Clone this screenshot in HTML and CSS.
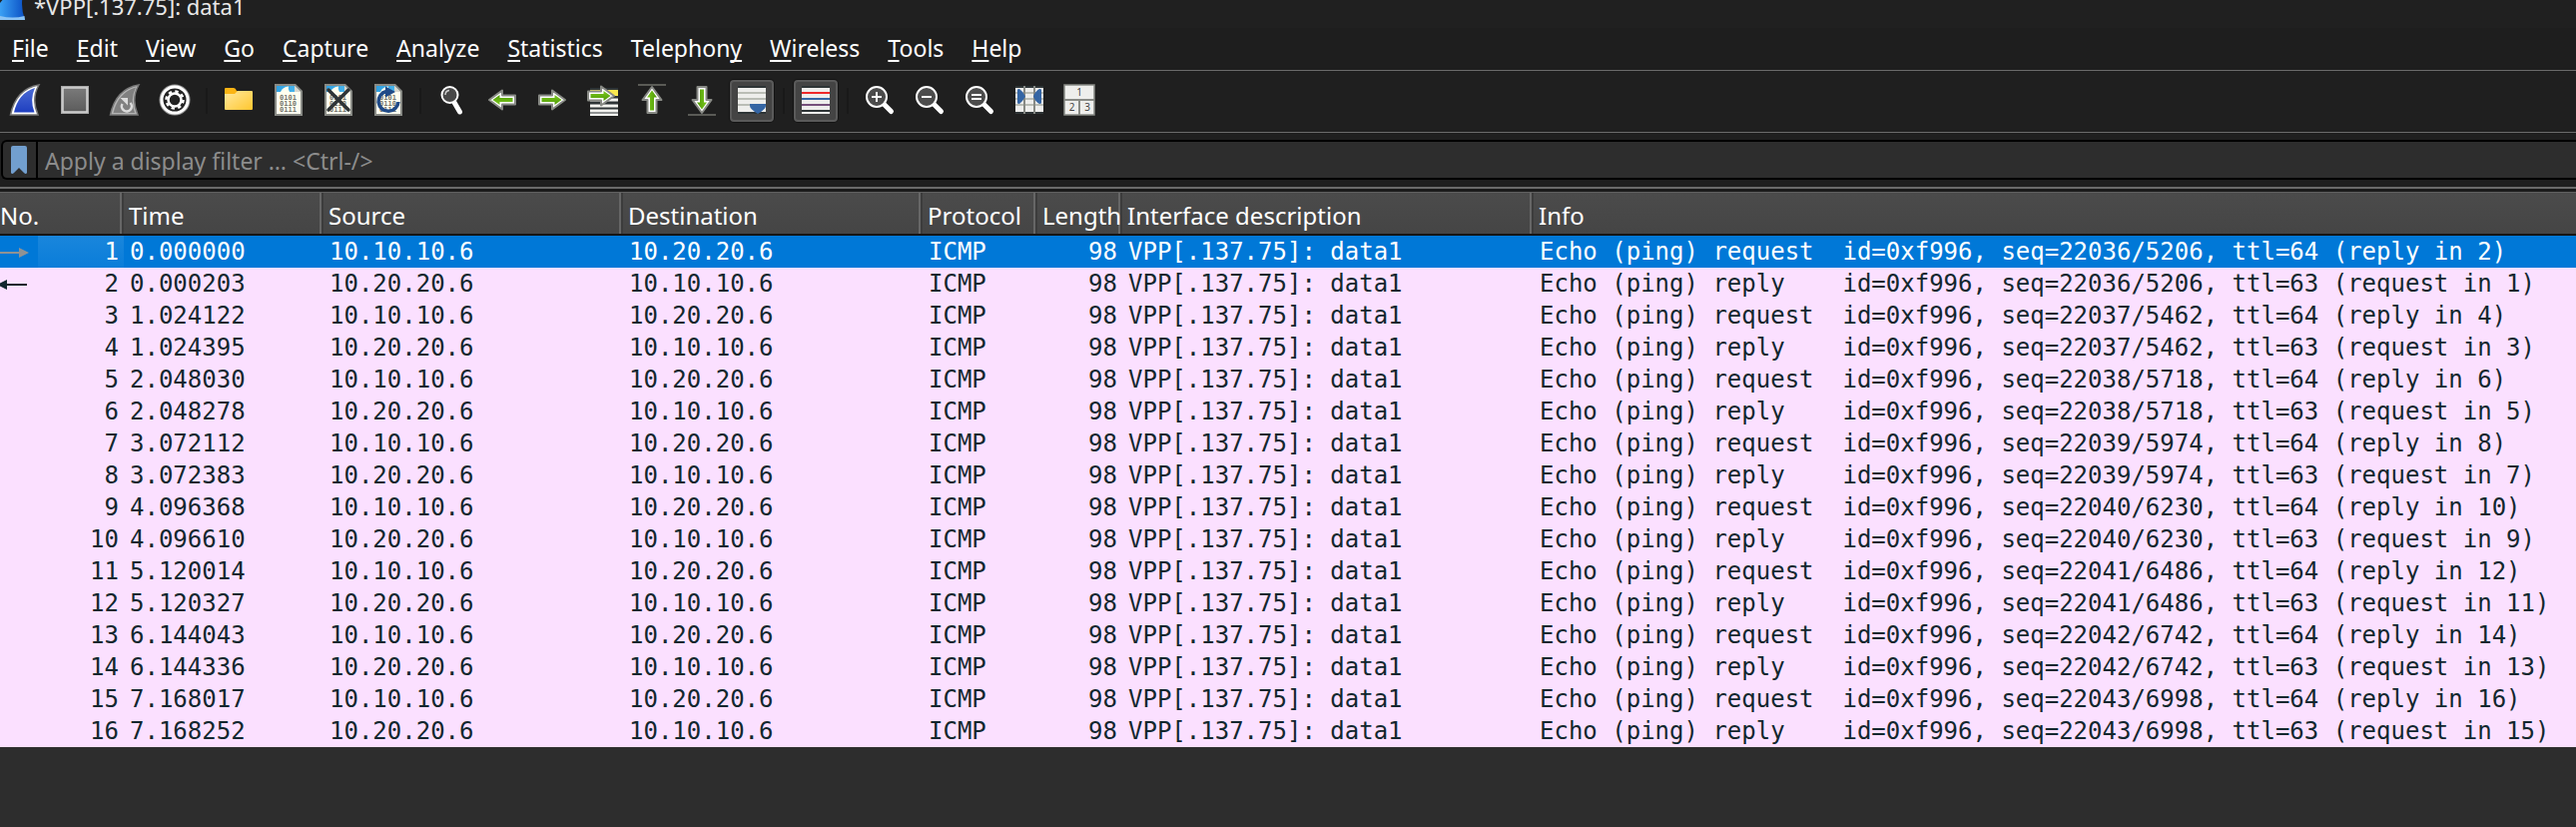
FILE: index.html
```html
<!DOCTYPE html>
<html lang="en">
<head>
<meta charset="utf-8">
<title>*VPP[.137.75]: data1</title>
<link rel="stylesheet" href="styles.css">
</head>
<body>
<svg class="defs" aria-hidden="true">
  <defs>
    <linearGradient id="blue" x1="0" y1="0" x2="0" y2="1"><stop offset="0" stop-color="#4a6ad4"/><stop offset="1" stop-color="#1f3fc0"/></linearGradient>
    <linearGradient id="app" x1="0" y1="0" x2="1" y2="0"><stop offset="0" stop-color="#3aa0f4"/><stop offset="1" stop-color="#0a4fc4"/></linearGradient>
    <linearGradient id="grey" x1="0" y1="0" x2="0" y2="1"><stop offset="0" stop-color="#7a7a7a"/><stop offset="1" stop-color="#5c5c5c"/></linearGradient>
    <linearGradient id="green" x1="0" y1="0" x2="0" y2="1"><stop offset="0" stop-color="#7cc820"/><stop offset="1" stop-color="#4e9a06"/></linearGradient>
    <linearGradient id="gold" x1="0" y1="0" x2="1" y2="1"><stop offset="0" stop-color="#ffe9a0"/><stop offset="1" stop-color="#ffc62e"/></linearGradient>
    <linearGradient id="sky" x1="0" y1="0" x2="1" y2="0"><stop offset="0" stop-color="#2f9fe0"/><stop offset="1" stop-color="#4db8ee"/></linearGradient>
    <symbol id="doc" viewBox="0 0 32 32">
      <path d="M2 0H23L30 7V32H2Z" fill="#888a85"/>
      <path d="M4 2H22L28 8V30H4Z" fill="#fffff0"/>
      <path d="M4 2H22L27 8H17Q15 5 16 2.500Q10 3 8 8H4Z" fill="url(#sky)"/>
      <path d="M22 2V8H28Z" fill="#d8d8d0"/>
      <g class="bits"><text x="7" y="16">0101</text><text x="7" y="22">0110</text><text x="7" y="28">0111</text></g>
    </symbol>
    <symbol id="arrow" viewBox="0 0 32 32">
      <path d="M3 11.500H16V6.500L29 16L16 25.500V20.500H3Z" fill="#fff" stroke="#888a85" stroke-width="2" stroke-linejoin="round"/>
      <path d="M5.500 14H18.500V11L25.500 16L18.500 21V18H5.500Z" fill="url(#green)"/>
    </symbol>
    <symbol id="lens" viewBox="0 0 32 32">
      <path d="M19 19L27.500 27.500" stroke="#fff" stroke-width="5" stroke-linecap="round"/>
      <circle cx="13" cy="13" r="10" fill="#4c4c4c" stroke="#fff" stroke-width="2"/>
    </symbol>
  </defs>
</svg>

<header class="titlebar">
  <svg class="app-icon" viewBox="0 0 26 32" aria-hidden="true"><path d="M0 32V15Q9 3 25 0Q19 16 25 32Z" fill="url(#app)"/><path d="M0 28Q13 31 24.500 28L25 32H0Z" fill="#8cc4f4"/></svg>
  <span class="title">*VPP[.137.75]: data1</span>
</header>

<nav class="menubar" aria-label="Main menu">
  <button type="button"><u>F</u>ile</button>
  <button type="button"><u>E</u>dit</button>
  <button type="button"><u>V</u>iew</button>
  <button type="button"><u>G</u>o</button>
  <button type="button"><u>C</u>apture</button>
  <button type="button"><u>A</u>nalyze</button>
  <button type="button"><u>S</u>tatistics</button>
  <button type="button">Telephon<u>y</u></button>
  <button type="button"><u>W</u>ireless</button>
  <button type="button"><u>T</u>ools</button>
  <button type="button"><u>H</u>elp</button>
</nav>

<div class="toolbar" role="toolbar" aria-label="Main toolbar">
  <button type="button" aria-label="Start capture"><svg viewBox="0 0 32 32"><path d="M1.500 31Q7 5 30 1Q22 15 29 31Z" fill="#fff" stroke="#777" stroke-width="1.500"/><path d="M5 28.500Q9.500 9 26 4Q20.500 16 25.500 28.500Z" fill="url(#blue)"/></svg></button>
  <button type="button" aria-label="Stop capture"><svg viewBox="0 0 32 32"><path d="M2 2H30V30H2Z" fill="#a8a8a8"/><path d="M4 4H28V28H4Z" fill="url(#grey)" stroke="#d4d4d4" stroke-width="1.500"/></svg></button>
  <button type="button" aria-label="Restart capture"><svg viewBox="0 0 32 32"><path d="M1.500 31Q7 5 30 1Q22 15 29 31Z" fill="#b4b4b4" stroke="#777" stroke-width="1.500"/><path d="M4.500 29Q9.500 8.500 27 3.500Q21 16 26 29Z" fill="#808080"/><path d="M13.500 20A5 5 0 1 0 21.500 19" fill="none" stroke="#dcdcdc" stroke-width="2.500"/><path d="M11.500 14H19V21.500Z" fill="#dcdcdc"/></svg></button>
  <button type="button" aria-label="Capture options"><svg viewBox="0 0 32 32"><circle cx="16" cy="16" r="15.500" fill="#999"/><circle cx="16" cy="16" r="13" fill="#222" stroke="#fff" stroke-width="3"/><circle cx="16" cy="16" r="6.500" fill="none" stroke="#fff" stroke-width="2.500"/><circle cx="16" cy="16" r="8.500" fill="none" stroke="#fff" stroke-width="2.500" stroke-dasharray="3.340 3.340"/></svg></button>
  <span class="sep"></span>
  <button type="button" aria-label="Open file"><svg viewBox="0 0 32 32"><path d="M2 5Q2 4 3 4H11Q13 4 14 7H24V11H2Z" fill="#fbb414"/><path d="M2 10H12L15 7H29Q30 7 30 8V25Q30 26 29 26H3Q2 26 2 25Z" fill="url(#gold)"/></svg></button>
  <button type="button" aria-label="Save file"><svg viewBox="0 0 32 32"><use href="#doc"/></svg></button>
  <button type="button" aria-label="Close file"><svg viewBox="0 0 32 32"><use href="#doc"/><path d="M6 6L26 26M26 6L6 26" stroke="#2e3436" stroke-width="3.500" stroke-linecap="round"/></svg></button>
  <button type="button" aria-label="Reload file"><svg viewBox="0 0 32 32"><use href="#doc"/><path d="M14 7.500A10 10 0 1 0 26 18" fill="none" stroke="#204a87" stroke-width="3.500"/><path d="M13 2.500L23 8L13 13.500Z" fill="#204a87"/></svg></button>
  <span class="sep"></span>
  <button type="button" aria-label="Find packet"><svg viewBox="0 0 32 32"><path d="M18 18.500L23.500 28" stroke="#fff" stroke-width="5" stroke-linecap="round"/><circle cx="13.500" cy="11" r="8" fill="#484848" stroke="#fff" stroke-width="2"/><path d="M9 11Q9 7 13 6.500" fill="none" stroke="#ccc" stroke-width="1.500"/></svg></button>
  <button type="button" aria-label="Previous packet"><svg viewBox="0 0 32 32"><use href="#arrow" transform="rotate(180 16 16)"/></svg></button>
  <button type="button" aria-label="Next packet"><svg viewBox="0 0 32 32"><use href="#arrow"/></svg></button>
  <button type="button" aria-label="Go to packet"><svg viewBox="0 0 32 32"><path d="M4 4H32V32H4Z" fill="#2e3436"/><path d="M4 6H32V12H4Z" fill="#fce94f"/><path d="M4 16H32M4 22H32M4 27H32M4 31H32" stroke="#f4f4f0" stroke-width="3"/><use href="#arrow" x="-1" y="-4"/></svg></button>
  <button type="button" aria-label="First packet"><svg viewBox="0 0 32 32"><path d="M2 1H30" stroke="#5a5b56" stroke-width="2"/><use href="#arrow" transform="rotate(-90 16 16)"/></svg></button>
  <button type="button" aria-label="Last packet"><svg viewBox="0 0 32 32"><path d="M2 31H30" stroke="#5a5b56" stroke-width="2"/><use href="#arrow" transform="rotate(90 16 16)"/></svg></button>
  <button type="button" class="on" aria-pressed="true" aria-label="Auto scroll"><svg viewBox="0 0 32 32"><path d="M2 2H30V30H2Z" fill="#2e3436"/><path d="M2 4H30V28H2Z" fill="#eeeeec"/><path d="M2 9H30M2 15H30M2 21H30" stroke="#babdb6" stroke-width="2"/><path d="M14 20H30V22Q30 25 22 30Q14 25 14 22Z" fill="#3465a4"/></svg></button>
  <span class="sep"></span>
  <button type="button" class="on" aria-pressed="true" aria-label="Colorize packets"><svg viewBox="0 0 32 32"><path d="M2 2H30V30H2Z" fill="#eeeeec"/><path d="M2 3H30M2 27H30" stroke="#2e3436" stroke-width="2"/><path d="M2 9H30" stroke="#ef2929" stroke-width="2"/><path d="M2 15H30" stroke="#3465a4" stroke-width="2"/><path d="M2 21H30" stroke="#75507b" stroke-width="2"/></svg></button>
  <span class="sep"></span>
  <button type="button" aria-label="Zoom in"><svg viewBox="0 0 32 32"><use href="#lens"/><path d="M8 13H18M13 8V18" stroke="#fff" stroke-width="2"/></svg></button>
  <button type="button" aria-label="Zoom out"><svg viewBox="0 0 32 32"><use href="#lens"/><path d="M8 13H18" stroke="#fff" stroke-width="2"/></svg></button>
  <button type="button" aria-label="Normal size"><svg viewBox="0 0 32 32"><use href="#lens"/><path d="M8 11H18M8 15H18" stroke="#fff" stroke-width="2"/></svg></button>
  <button type="button" aria-label="Resize columns"><svg viewBox="0 0 32 32"><path d="M2 2H30V30H2Z" fill="#2e3436"/><path d="M2 4H30V28H2Z" fill="#eeeeec"/><path d="M2 9H30M2 15H30M2 21H30" stroke="#babdb6" stroke-width="2"/><path d="M11 2V30M21 2V30" stroke="#888a85" stroke-width="2"/><path d="M4 6Q4 5 6 5Q9 7 12 12.500Q9 18 6 20Q4 20 4 19ZM28 6Q28 5 26 5Q22 7 20 12.500Q22 18 26 20Q28 20 28 19Z" fill="#3465a4"/></svg></button>
  <button type="button" aria-label="Reset layout"><svg viewBox="0 0 32 32"><path d="M1 1H31V31H1Z" fill="#eeeeec" stroke="#888a85" stroke-width="1.500"/><path d="M1 16H31M16 16V31" stroke="#888a85" stroke-width="2"/><g class="nums"><text x="16" y="12">1</text><text x="8.500" y="27">2</text><text x="24" y="27">3</text></g></svg></button>
</div>

<form class="filterbar">
  <div class="filter">
    <button type="button" aria-label="Filter bookmarks"><svg class="bookmark" viewBox="0 0 16 28"><path d="M0 2Q0 0 2 0H14Q16 0 16 2V27Q15 29 13 27L8 22L3 27Q1 29 0 27Z" fill="#729fcf"/></svg></button>
    <input type="text" aria-label="Display filter" placeholder="Apply a display filter … &lt;Ctrl-/&gt;">
  </div>
</form>

<main>
  <table class="packets">
    <colgroup><col class="c-no"><col class="c-time"><col class="c-addr"><col class="c-addr"><col class="c-proto"><col class="c-len"><col class="c-if"><col></colgroup>
    <thead><tr><th>No.</th><th>Time</th><th>Source</th><th>Destination</th><th>Protocol</th><th>Length</th><th>Interface description</th><th>Info</th></tr></thead>
    <tbody id="rows"></tbody>
  </table>
</main>
<script src="packets.js"></script>
</body>
</html>
```
FILE: styles.css
```css
* { box-sizing: border-box; }

body {
  margin: 0;
  min-height: 100vh;
  background: #2d2d2d;
  color: #fff;
  font: 23px/32px "Noto Sans", "Open Sans", sans-serif;
  overflow-x: hidden;
}

button, input { margin: 0; padding: 0; border: 0; background: none; color: inherit; font: inherit; }
svg { display: block; }
.defs { position: absolute; width: 0; height: 0; }

.titlebar {
  display: flex;
  align-items: flex-end;
  gap: 8px;
  height: 28px;
  padding-bottom: 6px;
  overflow: hidden;
  background: #202020;
}
.app-icon { width: 26px; height: 32px; margin-bottom: 2px; }
.title { color: #e8e8e8; font-size: 22px; }

.menubar {
  display: flex;
  gap: 28px;
  padding: 4px 12px 6px;
  background: #1e1e1e;
}
.menubar u { text-decoration-thickness: 2px; text-underline-offset: 3px; text-decoration-skip-ink: none; }

.toolbar {
  display: flex;
  gap: 6px;
  padding: 9px 3px 10px;
  border-top: 1px solid #6a6a6a;
  border-bottom: 1px solid #6a6a6a;
  background: #1f1f1f;
}
.toolbar button {
  display: grid;
  place-items: center;
  width: 44px;
  height: 42px;
  padding-bottom: 2px;
}
.toolbar svg { width: 32px; height: 32px; }
.toolbar .on {
  padding-bottom: 0;
  border: 2px solid #5a5a5a;
  border-radius: 4px;
  background: #444;
  box-shadow: 0 0 0 1px #141414;
}
.toolbar .on svg { margin-top: -2px; }
.sep { width: 8px; margin: 8px 0; background: linear-gradient(#191919, #191919) center / 2px 100% no-repeat; }
.bits { font: bold 7px "DejaVu Sans Mono", monospace; fill: #77786f; }
.nums { font: 10px "Noto Sans", sans-serif; fill: #444; text-anchor: middle; }

.filterbar { padding: 7px 0 7px 1px; background: #1f1f1f; border-bottom: 2px solid #6a6a6a; }
.filter {
  display: flex;
  height: 40px;
  border: 2px solid #000;
  border-right: 0;
  border-radius: 6px 0 0 6px;
  background: #2d2d2d;
}
.filter button { display: grid; place-items: center; width: 35px; padding-right: 2px; border-right: 2px solid #000; }
.bookmark { width: 16px; height: 28px; }
.filter input { flex: 1; padding: 2px 7px 0; outline: 0; }
.filter input::placeholder { color: #8c8c8c; opacity: 1; }

main { border-top: 3px solid #1a1a1a; }
.packets { width: 100%; table-layout: fixed; border-collapse: separate; border-spacing: 0; }
.c-no { width: 124px; }
.c-time { width: 200px; }
.c-addr { width: 300px; }
.c-proto { width: 115px; }
.c-len { width: 85px; }
.c-if { width: 412px; }

th {
  height: 44px;
  padding: 5px 0 0 5px;
  border-top: 1px solid #606060;
  border-bottom: 2px solid #161616;
  background:
    linear-gradient(to right, #666 2px, #3c3c3c 2px) right / 4px 100% no-repeat,
    linear-gradient(#4b4b4b, #454545);
  font-size: 24px;
  font-weight: 400;
  text-align: left;
  white-space: nowrap;
}
th:first-child { padding-left: 0; }
th:last-child { background: linear-gradient(#4b4b4b, #454545); }

td {
  height: 32px;
  padding: 0 6px;
  background: #fbe0ff;
  color: #12272e;
  font: 24px/32px "DejaVu Sans Mono", "Liberation Mono", monospace;
  white-space: pre;
  overflow: hidden;
}
td.num { padding-right: 5px; text-align: right; }
.no { display: flex; align-items: center; justify-content: space-between; margin-left: -6px; }
.no b { flex: 1; font-weight: 400; }
.dir { width: 30px; height: 32px; }
.selected td { background: #0078d7; color: #fff; }
.selected td:first-child { background: linear-gradient(#1a86dc, #0a7dd9) right / 86px 100% no-repeat, #0078d7; }
```
FILE: packets.js
```javascript
const times = [
  "0.000000", "0.000203", "1.024122", "1.024395", "2.048030", "2.048278", "3.072112", "3.072383",
  "4.096368", "4.096610", "5.120014", "5.120327", "6.144043", "6.144336", "7.168017", "7.168252",
];
const arrows = {
  1: '<svg class="dir" viewBox="0 0 30 32"><path d="M0 17H20" stroke="#8f9294" stroke-width="2"/><path d="M19 12L29 17L19 22Z" fill="#8f9294"/></svg>',
  2: '<svg class="dir" viewBox="0 0 30 32"><path d="M5 17H27" stroke="#12272e" stroke-width="2"/><path d="M7 12V22L-3 17Z" fill="#12272e"/></svg>',
};

document.getElementById("rows").innerHTML = times.map((time, i) => {
  const no = i + 1;
  const pair = i >> 1;
  const request = i % 2 === 0;
  const hosts = request ? ["10.10.10.6", "10.20.20.6"] : ["10.20.20.6", "10.10.10.6"];
  const seq = `${22036 + pair}/${5206 + 256 * pair}`;
  const info = request
    ? `Echo (ping) request  id=0xf996, seq=${seq}, ttl=64 (reply in ${no + 1})`
    : `Echo (ping) reply    id=0xf996, seq=${seq}, ttl=63 (request in ${no - 1})`;
  return `<tr${no === 1 ? ' class="selected"' : ""}>` +
    `<td class="num"><div class="no">${arrows[no] || ""}<b>${no}</b></div></td>` +
    `<td>${time}</td><td>${hosts[0]}</td><td>${hosts[1]}</td><td>ICMP</td>` +
    `<td class="num">98</td><td>VPP[.137.75]: data1</td><td>${info}</td></tr>`;
}).join("");
```
